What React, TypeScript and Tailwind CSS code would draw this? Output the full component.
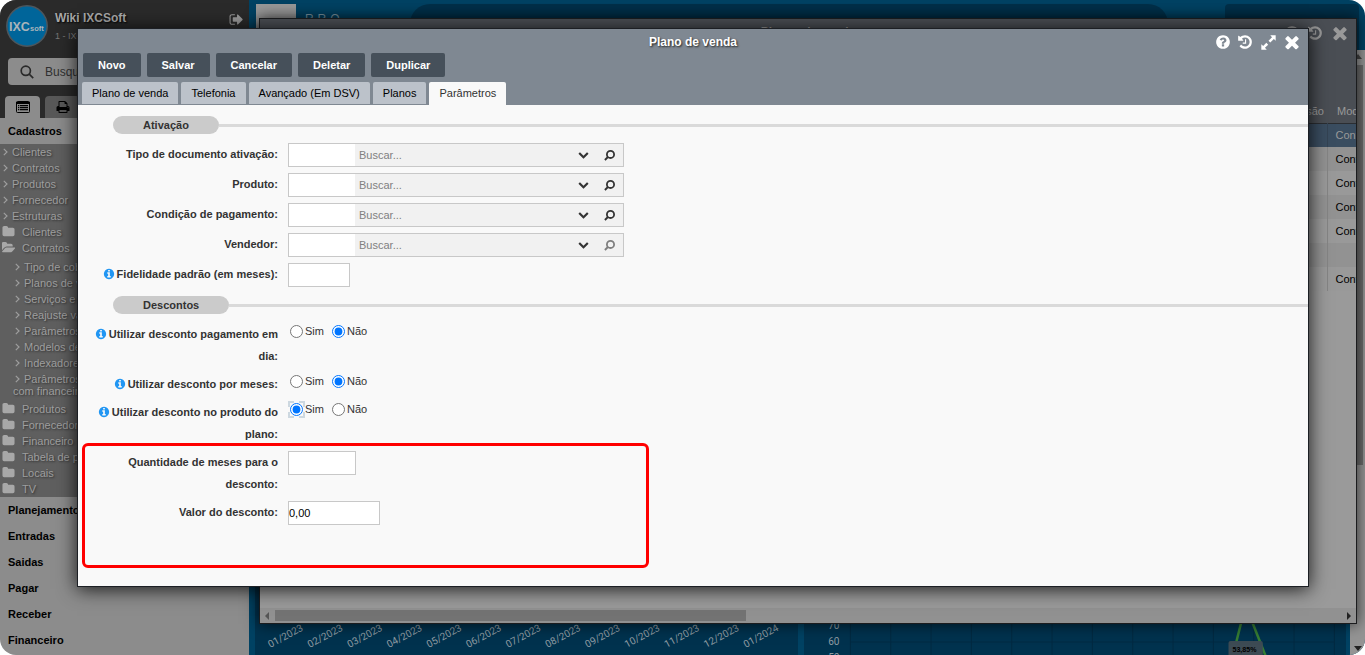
import React, { useState } from 'react';

const CIRCLE = 'm640 416q0 209-103 385.5t-279.5 279.5-385.5 103-385.5-103-279.5-279.5-103-385.5 103-385.5 279.5-279.5 385.5-103 385.5 103 279.5 279.5 103 385.5z';

const paths = {
  close:
    'M1490 1322q0 40-28 68l-136 136q-28 28-68 28t-68-28l-294-294-294 294q-28 28-68 28t-68-28l-136-136q-28-28-28-68t28-68l294-294-294-294q-28-28-28-68t28-68l136-136q28-28 68-28t68 28l294 294 294-294q28-28 68-28t68 28l136 136q28 28 28 68t-28 68l-294 294 294 294q28 28 28 68z',
  history:
    'M1664 896q0 156-61 298t-164 245-245 164-298 61q-172 0-327-72.5t-264-204.5q-7-10-6.5-22.5t8.5-20.5l137-138q10-9 25-9 16 2 23 12 73 95 179 147t225 52q104 0 198.5-40.5t163.5-109.5 109.5-163.5 40.5-198.5-40.5-198.5-109.5-163.5-163.5-109.5-198.5-40.5q-98 0-188 35.5t-160 101.5l137 138q31 30 14 69-17 40-59 40h-448q-26 0-45-19t-19-45v-448q0-42 40-59 39-17 69 14l130 129q107-101 244.5-156.5t284.5-55.5q156 0 298 61t245 164 164 245 61 298zm-640-288v448q0 14-9 23t-23 9h-320q-14 0-23-9t-9-23v-64q0-14 9-23t23-9h224v-352q0-14 9-23t23-9h64q14 0 23 9t9 23z',
  help:
    'M1024 1376v-192q0-14-9-23t-23-9h-192q-14 0-23 9t-9 23v192q0 14 9 23t23 9h192q14 0 23-9t9-23zm256-672q0-88-55.5-163t-138.5-116-170-41q-243 0-371 213-15 24 8 42l132 100q7 6 19 6 16 0 25-12 53-68 86-92 34-24 86-24 48 0 85.5 26t37.5 59q0 38-20 61t-68 45q-63 28-115.5 86.5t-52.5 125.5v36q0 14 9 23t23 9h192q14 0 23-9t9-23q0-19 21.5-49.5t54.5-49.5q32-18 49-28.5t46-35 44.5-48 28-60.5 12.5-81zm384 192q0 209-103 385.5t-279.5 279.5-385.5 103-385.5-103-279.5-279.5-103-385.5 103-385.5 279.5-279.5 385.5-103 385.5 103 279.5 279.5 103 385.5z',
  info:
    'M1152 1376v-160q0-14-9-23t-23-9h-96v-512q0-14-9-23t-23-9h-320q-14 0-23 9t-9 23v160q0 14 9 23t23 9h96v320h-96q-14 0-23 9t-9 23v160q0 14 9 23t23 9h448q14 0 23-9t9-23zm-128-896v-160q0-14-9-23t-23-9h-192q-14 0-23 9t-9 23v160q0 14 9 23t23 9h192q14 0 23-9t9-23z' + CIRCLE,
  signOut:
    'M704 1440q0 4 1 20t.5 26.5-3 23.5-10 19.5-20.5 6.5h-320q-119 0-203.5-84.5t-84.5-203.5v-704q0-119 84.5-203.5t203.5-84.5h320q13 0 22.5 9.5t9.5 22.5q0 4 1 20t.5 26.5-3 23.5-10 19.5-20.5 6.5h-320q-66 0-113 47t-47 113v704q0 66 47 113t113 47h312l11.5 1 11.5 3 8 5.5 7 9 2 13.5zm928-544q0 26-19 45l-544 544q-19 19-45 19t-45-19-19-45v-288h-448q-26 0-45-19t-19-45v-384q0-26 19-45t45-19h448v-288q0-26 19-45t45-19 45 19l544 544q19 19 19 45z',
  print:
    'M448 1536h896v-256h-896v256zm0-640h896v-384h-160q-40 0-68-28t-28-68v-160h-640v640zm1152 64q0-26-19-45t-45-19-45 19-19 45 19 45 45 19 45-19 19-45zm128 0v416q0 13-9.5 22.5t-22.5 9.5h-224v160q0 40-28 68t-68 28h-960q-40 0-68-28t-28-68v-160h-224q-13 0-22.5-9.5t-9.5-22.5v-416q0-79 56.5-135.5t135.5-56.5h64v-544q0-40 28-68t68-28h672q40 0 88 20t76 48l152 152q28 28 48 76t20 88v256h64q79 0 135.5 56.5t56.5 135.5z',
  folder:
    'M1728 608v704q0 92-66 158t-158 66h-1216q-92 0-158-66t-66-158v-960q0-92 66-158t158-66h320q92 0 158 66t66 158v32h672q92 0 158 66t66 158z',
  folderOpen:
    'M1815 952q0 31-31 66l-336 396q-43 51-120.5 86.5t-143.5 35.5h-1088q-34 0-60.5-13t-26.5-43q0-31 31-66l336-396q43-51 120.5-86.5t143.5-35.5h1088q34 0 60.5 13t26.5 43zm-343-344v160h-832q-94 0-197 47.5t-164 119.5l-337 396-5 6q0-4-.5-12.5t-.5-12.5v-960q0-92 66-158t158-66h320q92 0 158 66t66 158v32h544q92 0 158 66t66 158z',
  chevronDown:
    'M1683 808l-742 741q-19 19-45 19t-45-19l-742-741q-19-19-19-45.5t19-45.5l166-165q19-19 45-19t45 19l531 531 531-531q19-19 45-19t45 19l166 165q19 19 19 45.5t-19 45.5z',
};

const Icon: React.FC<{ name: keyof typeof paths; className?: string }> = ({ name, className }) => (
  <svg viewBox="0 0 1792 1792" fill="currentColor" className={className} aria-hidden="true">
    <path d={paths[name]} />
  </svg>
);

const AngleRight = () => (
  <svg viewBox="0 0 5 8" className="inline-block h-2 w-[5px] shrink-0" fill="none" stroke="currentColor" strokeWidth="1.2" aria-hidden="true">
    <path d="M0.8 0.8 4 4 0.8 7.2" />
  </svg>
);

const ExpandIcon = () => (
  <svg viewBox="0 0 14 14" className="size-[15px]" fill="currentColor" aria-hidden="true">
    <path d="M8.6 0.3H13.7V5.4L12 3.7 8.7 7 7 5.3 10.3 2ZM5.4 13.7H0.3V8.6L2 10.3 5 7.3 6.7 9 3.7 12Z" />
  </svg>
);

const LookupIcon = () => (
  <svg viewBox="0 0 12 12" className="size-3" fill="none" stroke="currentColor" strokeWidth="1.8" aria-hidden="true">
    <circle cx="6.5" cy="5.4" r="3.6" />
    <path d="M3.9 8 0.9 11" />
  </svg>
);

/* ---------- Sidebar ---------- */

const links = ['Clientes', 'Contratos', 'Produtos', 'Fornecedor', 'Estruturas'];
const contractLinks = [
  'Tipo de cobrança',
  'Planos de venda',
  'Serviços e produtos',
  'Reajuste valores',
  'Parâmetros',
  'Modelos de contrato',
  'Indexadores',
];
const folders = ['Produtos', 'Fornecedor', 'Financeiro', 'Tabela de preços', 'Locais', 'TV'];
const menus = ['Planejamento', 'Entradas', 'Saidas', 'Pagar', 'Receber', 'Financeiro'];

const FolderRow: React.FC<{ label: string; open?: boolean }> = ({ label, open }) => (
  <li>
    <a href="#" className="flex h-4 items-center gap-[7px] pl-0.5">
      <Icon name={open ? 'folderOpen' : 'folder'} className="mb-0.5 size-[13px] shrink-0 text-[#a8a8a8]" />
      {label}
    </a>
  </li>
);

const Sidebar = () => (
  <aside className="flex w-[249px] shrink-0 flex-col overflow-hidden bg-[#8c8c8c]">
    <div className="bg-[#2a2a2a]">
      <div className="flex h-[52px] gap-[7px] pt-[5px] pr-[5px] pl-1.5">
        <svg viewBox="0 0 42 42" className="size-[42px] shrink-0" role="img" aria-label="IXCsoft">
          <circle cx="21" cy="21" r="20.2" fill="#00659a" stroke="#4d565c" strokeWidth="1.5" />
          <text x="3" y="26" fill="#a9b4ba" fontFamily="Liberation Sans, sans-serif" fontWeight="bold" fontSize="12.5">IXC</text>
          <text x="24" y="26" fill="#a9b4ba" fontFamily="Liberation Sans, sans-serif" fontWeight="bold" fontSize="7.5">soft</text>
        </svg>
        <div className="flex-1 pt-[5px]">
          <div className="text-[12px] leading-4 font-bold text-[#a8a8a8] [text-shadow:1px_1px_2px_#000]">Wiki IXCSoft</div>
          <div className="mt-1 text-[9px] leading-3 text-[#777]">1 - IXCSoft</div>
        </div>
        <button aria-label="Sair" className="h-7 text-[#999]">
          <Icon name="signOut" className="size-[15px]" />
        </button>
      </div>
      <label className="mx-2 mt-1.5 flex h-[27px] items-center gap-[11px] rounded bg-[#8c8c8c] pl-3">
        <svg viewBox="0 0 14 14" className="size-[14px] shrink-0" fill="none" stroke="#2a2a2a" strokeWidth="1.7" aria-hidden="true">
          <circle cx="5.8" cy="5.8" r="4.6" />
          <path d="m9.2 9.2 4 4" />
        </svg>
        <input placeholder="Busque aqui" aria-label="Busque aqui" className="w-full text-[12px] placeholder:text-[#303030]" />
      </label>
      <div className="mt-[11px] flex h-[22px] gap-[5px] pl-[5px]">
        <button aria-label="Menu" className="flex w-[35px] items-center justify-center rounded-t bg-[#8c8c8c]">
          <svg viewBox="0 0 14 12" className="h-3 w-[14px]" aria-hidden="true">
            <rect x="0.5" y="0.5" width="13" height="11" rx="1" fill="none" stroke="#000" />
            <path d="M0 1h14v2H0zM2 4h1.3v1.3H2zM2 6h1.3v1.3H2zM2 8h1.3v1.3H2zM4 4h8v1.3H4zM4 6h8v1.3H4zM4 8h8v1.3H4z" />
          </svg>
        </button>
        <button aria-label="Imprimir" className="flex w-[35px] items-center justify-center rounded-t bg-[#585858]">
          <Icon name="print" className="size-[14px]" />
        </button>
      </div>
    </div>

    <a href="#" className="flex h-[26px] items-center px-2 text-[11px] font-bold">Cadastros</a>
    <ul className="bg-[#5f5f5f] text-[11px] whitespace-nowrap text-[#9e9e9e] [text-shadow:1px_1px_2px_#333]">
      {links.map((l) => (
        <li key={l}>
          <a href="#" className="flex h-4 items-center gap-1 pl-[3px]">
            <AngleRight />
            {l}
          </a>
        </li>
      ))}
      <FolderRow label="Clientes" />
      <FolderRow label="Contratos" open />
      <li>
        <ul className="pt-[3px] pb-0.5 leading-3">
          {contractLinks.map((l) => (
            <li key={l}>
              <a href="#" className="flex h-4 items-center gap-1 pl-[15px]">
                <AngleRight />
                {l}
              </a>
            </li>
          ))}
          <li className="py-0.5 pl-[13px]">
            <a href="#" className="block">
              <span className="flex items-center gap-1 pl-0.5">
                <AngleRight />
                Parâmetros
              </span>
              com financeiro
            </a>
          </li>
        </ul>
      </li>
      {folders.map((f) => (
        <FolderRow key={f} label={f} />
      ))}
    </ul>
    <nav className="text-[11px] font-bold">
      {menus.map((m) => (
        <a key={m} href="#" className="flex h-[26px] items-center px-2">{m}</a>
      ))}
    </nav>
  </aside>
);

/* ---------- Dashboard behind the windows ---------- */

const months = [
  '01/2023', '02/2023', '03/2023', '04/2023', '05/2023', '06/2023', '07/2023',
  '08/2023', '09/2023', '10/2023', '11/2023', '12/2023', '01/2024',
];

const Dashboard = () => (
  <main className="flex min-w-0 flex-1 flex-col bg-[#004263]">
    <header className="flex h-[50px] shrink-0 items-start pt-1 pr-1.5 pl-[7px]">
      <div className="h-10 w-10 shrink-0 bg-[#999]" />
      <div className="w-[114px] shrink-0 pt-1.5 pl-[9px] text-[12px] tracking-wide whitespace-nowrap text-[#7f9aa8]">R R O —</div>
      <div className="h-10 flex-1 rounded-[20px] bg-[#00304a]" />
      <div className="ml-[57px] h-12 w-[134px] rounded bg-[#00304a]" />
    </header>
    <div className="flex min-h-0 flex-1">
      <div className="flex min-w-0 flex-1 items-end gap-1.5 pr-1 pl-1.5">
        <svg viewBox="0 0 542 600" preserveAspectRatio="xMinYMax slice" className="h-full min-w-0 flex-1 bg-[#00324e]" aria-hidden="true">
          {months.map((m, i) => (
            <text key={m} transform={`translate(${15 + i * 39.3} 593) rotate(-28)`} fill="#8e9ba2" fontFamily="Roboto, sans-serif" fontSize="10">
              {m}
            </text>
          ))}
        </svg>
        <svg viewBox="0 0 542 600" preserveAspectRatio="xMinYMax slice" className="h-full min-w-0 flex-1 bg-[#00324e]" aria-hidden="true">
          <path d="M46 0V600M86 0V600M126 0V600M166 0V600M206 0V600M246 0V600M286 0V600M326 0V600M366 0V600M406 0V600M446 0V600M486 0V600M526 0V600M46 587H526" stroke="#002a42" fill="none" />
          <g fill="#8e9ba2" fontFamily="Roboto, sans-serif" fontSize="10">
            <text x="24" y="574">70</text>
            <text x="24" y="590">60</text>
            <text x="24" y="606">50</text>
          </g>
          <path d="M425 602 434 566M444 566 459 604" stroke="#367d33" strokeWidth="2.5" fill="none" />
          <rect x="421" y="586" width="34" height="18" rx="2" fill="#3d4b54" />
          <text x="425" y="597" fontFamily="Liberation Sans, sans-serif" fontWeight="bold" fontSize="7">53,85%</text>
        </svg>
      </div>
      {/* page scrollbar */}
      <div className="flex w-[15px] shrink-0 flex-col items-center justify-between bg-[#949494] py-1">
        <div className="border-x-4 border-b-5 border-x-transparent border-b-[#444]" />
        <div className="mt-1.5 mb-auto h-[400px] w-[11px] bg-[#6b6b6b]" />
        <div className="border-x-4 border-t-5 border-x-transparent border-t-[#222]" />
      </div>
    </div>
  </main>
);

/* ---------- List window ---------- */

const rows = ['Contrato', 'Contrato', 'Contrato', 'Contrato', 'Contrato', '', 'Contrato'];

const ListWindow = () => (
  <section className="absolute top-[18px] right-2 bottom-[31px] left-[259px] flex flex-col overflow-hidden border border-[#1b1c1e] bg-[#9a9a9a] shadow-[0_0_14px_rgba(0,0,0,0.7)]">
    <div className="grid h-20 shrink-0 grid-cols-[1fr_auto_1fr] items-start bg-[#4a4e54] pt-1 text-[#999]">
      <h2 className="col-start-2 pt-px text-[12px] leading-4 font-bold">Planos de venda</h2>
      <div className="flex items-center justify-end gap-[7px] pr-1.5">
        <Icon name="help" className="size-4" />
        <Icon name="history" className="size-4" />
        <Icon name="close" className="size-5" />
      </div>
    </div>
    <table className="w-full table-fixed border-collapse text-[11px]">
      <thead className="bg-[#4a4e54] text-[#999]">
        <tr className="h-6 border-b border-[#2b2e32]">
          <th className="pr-[3px] text-right font-normal">Emissão</th>
          <th className="w-[29px] overflow-hidden pl-2.5 text-left font-normal">Modelo</th>
        </tr>
      </thead>
      <tbody>
        {rows.map((r, i) => (
          <tr key={i} className={i === 0 ? 'h-6 bg-[#3a4d60] text-[#999]' : i % 2 ? 'h-6 bg-[#929292]' : 'h-6 bg-[#999]'}>
            <td className={i === 0 ? 'border-r border-[#334353]' : 'border-r border-[#848484]'} />
            <td className="overflow-hidden pl-2">{r}</td>
          </tr>
        ))}
      </tbody>
    </table>
    <div className="mt-auto flex h-[15px] items-center justify-between bg-[#919191] px-[5px]">
      <div className="border-y-4 border-r-4 border-y-transparent border-r-[#555]" />
      <div className="mr-auto ml-1.5 h-[11px] w-[43.4%] bg-[#737373]" />
      <div className="border-y-4 border-l-4 border-y-transparent border-l-[#222]" />
    </div>
  </section>
);

/* ---------- Form window ---------- */

const actions = ['Novo', 'Salvar', 'Cancelar', 'Deletar', 'Duplicar'];
const tabs = ['Plano de venda', 'Telefonia', 'Avançado (Em DSV)', 'Planos', 'Parâmetros'];

const SectionTitle: React.FC<{ children: React.ReactNode }> = ({ children }) => (
  <div className="my-[9px] ml-[35px] flex items-center">
    <h3 className="h-[18px] rounded-full bg-[#cbcbcb] px-[30px] text-[11px] leading-[18px] font-bold">{children}</h3>
    <div className="h-[3px] flex-1 bg-[#dadada]" />
  </div>
);

interface RowProps {
  label: string;
  htmlFor?: string;
  info?: boolean;
  children: React.ReactNode;
}

const Row: React.FC<RowProps> = ({ label, htmlFor, info, children }) => (
  <div className="flex items-start gap-2.5">
    <label htmlFor={htmlFor} className="w-[200px] shrink-0 pl-3 text-right text-[11px] leading-[22px] font-bold">
      {info && <Icon name="info" className="mr-0.5 inline size-3 align-[-2px] text-[#2196f3]" />}
      {label}
    </label>
    {children}
  </div>
);

const Lookup: React.FC<{ label: string; id: string; disabled?: boolean }> = ({ label, id, disabled }) => (
  <Row label={label} htmlFor={id}>
    <div className="flex h-6 w-[336px] items-center border border-[#c8c8c8] bg-[#f1f1f1]">
      <input id={id} className="h-full w-[66px] bg-white px-px text-[11px]" />
      <input placeholder="Buscar..." aria-label={`Buscar ${label}`} className="min-w-0 flex-1 px-1 text-[11px] placeholder:text-[#808080]" />
      <button type="button" aria-label="Abrir lista" className="px-2 pb-0.5">
        <Icon name="chevronDown" className="size-[11px]" />
      </button>
      <button type="button" aria-label="Pesquisar" disabled={disabled} className="px-[7px] disabled:opacity-60">
        <LookupIcon />
      </button>
    </div>
  </Row>
);

const YesNo: React.FC<{ label: string; name: string; value: string; focused?: boolean }> = ({ label, name, value, focused }) => {
  const [current, setCurrent] = useState(value);
  return (
    <Row label={label} htmlFor={`${name}-Sim`} info>
      <div className="flex h-[17px] gap-2 pl-0.5 text-[11px]">
        {['Sim', 'Não'].map((o) => (
          <label key={o} className="flex items-center gap-0.5">
            <input
              type="radio"
              id={`${name}-${o}`}
              name={name}
              checked={current === o}
              onChange={() => setCurrent(o)}
              className={
                focused && o === 'Sim'
                  ? 'size-[13px] outline-2 outline-dashed outline-[#cdd8e0]'
                  : 'size-[13px]'
              }
            />
            {o}
          </label>
        ))}
      </div>
    </Row>
  );
};

const FormWindow = () => {
  const [tab, setTab] = useState('Parâmetros');

  return (
    <section className="absolute top-7 right-14 left-[77px] border border-[#1c1f24] bg-[#f9f9f9] text-[#333] shadow-[0_2px_18px_rgba(0,0,0,0.85)]">
      <header className="bg-[#7f8892]">
        <div className="grid h-6 grid-cols-[1fr_auto_1fr] items-center pt-0.5 text-white">
          <h2 className="col-start-2 text-[12px] font-bold [text-shadow:1px_1px_2px_#222]">Plano de venda</h2>
          <div className="flex items-center justify-end gap-1.5 pr-1.5">
            <button aria-label="Ajuda"><Icon name="help" className="size-4" /></button>
            <button aria-label="Histórico"><Icon name="history" className="size-4" /></button>
            <button aria-label="Expandir" className="ml-0.5"><ExpandIcon /></button>
            <button aria-label="Fechar"><Icon name="close" className="size-5" /></button>
          </div>
        </div>
        <div className="flex gap-1.5 px-[5px]">
          {actions.map((a) => (
            <button key={a} className="h-6 rounded-xs bg-[#46505a] px-[15px] text-[11px] font-bold text-white">{a}</button>
          ))}
        </div>
        <div role="tablist" className="flex gap-[3px] px-1 pt-[5px]">
          {tabs.map((t) => (
            <button
              key={t}
              role="tab"
              aria-selected={t === tab}
              onClick={() => setTab(t)}
              className={
                t === tab
                  ? 'h-[23px] rounded-t-xs bg-[#f9f9f9] px-2.5 text-[11px]'
                  : 'mb-px h-[22px] rounded-t-xs bg-[#bcc2ca] px-2.5 text-[11px] text-black'
              }
            >
              {t}
            </button>
          ))}
        </div>
      </header>

      <form className="pt-0.5 pb-[61px]">
        <SectionTitle>Ativação</SectionTitle>
        <div className="flex flex-col gap-1.5">
          <Lookup label="Tipo de documento ativação:" id="documento" />
          <Lookup label="Produto:" id="produto" />
          <Lookup label="Condição de pagamento:" id="condicao" />
          <Lookup label="Vendedor:" id="vendedor" disabled />
          <Row label="Fidelidade padrão (em meses):" htmlFor="fidelidade" info>
            <input id="fidelidade" className="h-6 w-[62px] border border-[#c8c8c8] bg-white px-px text-[11px]" />
          </Row>
        </div>

        <SectionTitle>Descontos</SectionTitle>
        <div className="flex flex-col gap-1.5">
          <YesNo label="Utilizar desconto pagamento em dia:" name="dia" value="Não" />
          <YesNo label="Utilizar desconto por meses:" name="meses" value="Não" />
          <YesNo label="Utilizar desconto no produto do plano:" name="plano" value="Sim" focused />
          <div className="relative flex flex-col gap-1.5">
            {/* highlight around the discount fields */}
            <div className="pointer-events-none absolute -top-2 left-1 h-[125px] w-[567px] rounded-md border-3 border-[#f00]" />
            <Row label="Quantidade de meses para o desconto:" htmlFor="quantidade">
              <input id="quantidade" className="h-6 w-[68px] border border-[#c8c8c8] bg-white px-px text-[11px]" />
            </Row>
            <Row label="Valor do desconto:" htmlFor="valor">
              <input id="valor" defaultValue="0,00" className="h-6 w-[92px] border border-[#c8c8c8] bg-white text-[11px] text-black" />
            </Row>
          </div>
        </div>
      </form>
    </section>
  );
};

const App: React.FC = () => (
  <div className="relative flex h-screen overflow-hidden rounded-2xl font-['Liberation_Sans',Arial,sans-serif]">
    <Sidebar />
    <Dashboard />
    <ListWindow />
    <FormWindow />
  </div>
);

export default App;
